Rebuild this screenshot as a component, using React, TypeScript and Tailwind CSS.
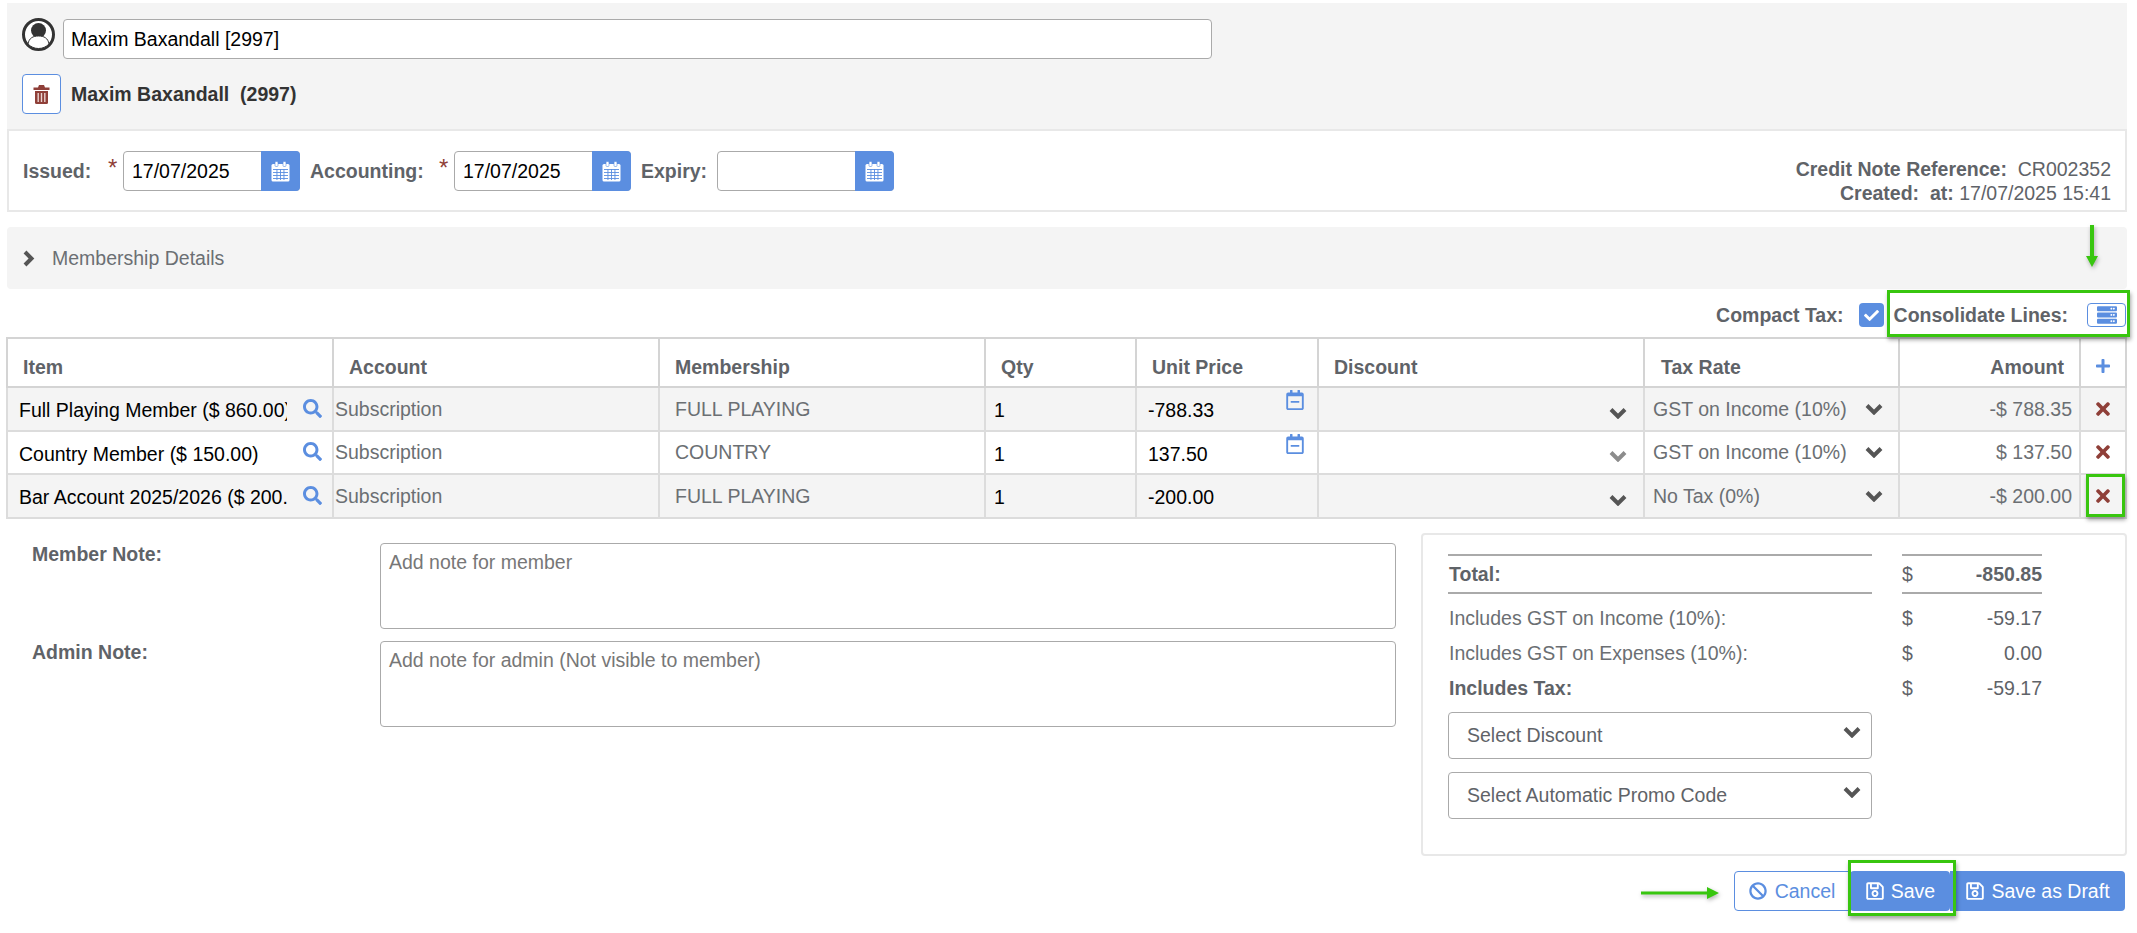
import React from 'react';
import {
  FaBan,
  FaCheck,
  FaPlus,
  FaRegCalendarMinus,
  FaRegSave,
  FaSearch,
  FaServer,
  FaTimes,
} from 'react-icons/fa';

const lines = [
  { item: 'Full Playing Member ($ 860.00)', membership: 'FULL PLAYING', price: '-788.33', tax: 'GST on Income (10%)', amount: '-$ 788.35', shade: true, cal: true },
  { item: 'Country Member ($ 150.00)', membership: 'COUNTRY', price: '137.50', tax: 'GST on Income (10%)', amount: '$ 137.50', shade: false, cal: true },
  { item: 'Bar Account 2025/2026 ($ 200.00)', membership: 'FULL PLAYING', price: '-200.00', tax: 'No Tax (0%)', amount: '-$ 200.00', shade: true, cal: false },
];

function CalendarIcon() {
  return (
    <svg width="19" height="21" viewBox="0 0 19 21" fill="none">
      <rect x="0.5" y="3" width="18" height="17.5" rx="1.5" fill="#fff" />
      <rect x="4" y="0.5" width="3" height="5" rx="1" fill="#fff" stroke="#5b8ee0" strokeWidth="0.6" />
      <rect x="12" y="0.5" width="3" height="5" rx="1" fill="#fff" stroke="#5b8ee0" strokeWidth="0.6" />
      <g fill="#5b8ee0">
        <rect x="2" y="8" width="15" height="0.9" />
        <rect x="2" y="11" width="15" height="0.9" />
        <rect x="2" y="14" width="15" height="0.9" />
        <rect x="2" y="17" width="15" height="0.9" />
        <rect x="5.500" y="8" width="0.9" height="11" />
        <rect x="9" y="8" width="0.9" height="11" />
        <rect x="12.500" y="8" width="0.9" height="11" />
      </g>
    </svg>
  );
}

function UserIcon() {
  return (
    <svg width="33" height="33" viewBox="0 0 33 33">
      <circle cx="16.5" cy="16.5" r="15" fill="#fff" stroke="#333" strokeWidth="3" />
      <circle cx="16.5" cy="12.5" r="7.500" fill="#333" />
      <path d="M6 26c1-6 5-8 10.500-8S26 20 27 26c-3 3-6.500 4.500-10.500 4.500S9 29 6 26z" fill="#fff" stroke="#333" strokeWidth="1" />
    </svg>
  );
}

function TrashIcon() {
  return (
    <svg width="17" height="19" viewBox="0 0 17 19" fill="#8f3f38">
      <path d="M6 0h5l1 2.500h4.500V5H.5V2.500H5z" />
      <path d="M2 6h13v11.500a1.500 1.500 0 0 1-1.500 1.500h-10A1.500 1.500 0 0 1 2 17.500z" />
      <g fill="#e9d3d0">
        <rect x="4.500" y="8" width="1.400" height="9" />
        <rect x="7.800" y="8" width="1.400" height="9" />
        <rect x="11.100" y="8" width="1.400" height="9" />
      </g>
    </svg>
  );
}

function Chevron({ color = '#555' }: { color?: string }) {
  return (
    <svg width="18" height="12" viewBox="0 0 18 12" fill="none" className="shrink-0">
      <path d="M2 2.500l7 7 7-7" stroke={color} strokeWidth="4" />
    </svg>
  );
}

function DateField({ value }: { value: string }) {
  return (
    <div className="flex h-10 w-[177px] rounded border border-[#aaaaaa] bg-white">
      <span className="flex-1 pl-[8px] leading-[38px] text-black">{value}</span>
      <span className="-my-px -mr-px flex w-[39px] items-center justify-center rounded-r bg-[#5b8ee0]">
        <CalendarIcon />
      </span>
    </div>
  );
}

function Highlight({ className }: { className: string }) {
  return <div className={`pointer-events-none absolute border-[3px] border-[#38c60f] shadow-[1px_3px_4px_rgba(0,0,0,0.35)] ${className}`} />;
}

export default function App() {
  return (
    <div className="relative h-[933px] w-[2137px] overflow-hidden bg-white pt-[3px] font-['Liberation_Sans',Arial,sans-serif] text-[19.5px] leading-[24px] text-[#5f6368]">
      {/* Member picker */}
      <div className="ml-[7px] h-[126px] w-[2120px] bg-[#f4f4f4] pl-[15px] pt-[15px]">
        <div className="flex items-start gap-[8px]">
          <UserIcon />
          <div className="mt-px h-10 w-[1149px] rounded border border-[#aaaaaa] bg-white pl-[7px] leading-[38px] text-black">Maxim Baxandall [2997]</div>
        </div>
        <div className="mt-[15px] flex items-center gap-[10px]">
          <button className="flex h-10 w-[39px] items-center justify-center rounded border border-[#5b8ee0] bg-white">
            <TrashIcon />
          </button>
          <span className="whitespace-pre font-bold text-[#333]">Maxim Baxandall  (2997)</span>
        </div>
      </div>

      {/* Dates */}
      <div className="ml-[7px] flex h-[83px] w-[2120px] items-start justify-between border-2 border-[#e8e8e8] pl-[14px] pr-[14px]">
        <div className="mt-5 flex items-center">
          <b className="w-[85px]">Issued:</b>
          <span className="w-[15px] -translate-y-[3px] text-[24px] text-[#8f3f38]">*</span>
          <DateField value="17/07/2025" />
          <b className="ml-[10px] w-[129px]">Accounting:</b>
          <span className="w-[15px] -translate-y-[3px] text-[24px] text-[#8f3f38]">*</span>
          <DateField value="17/07/2025" />
          <b className="ml-[10px] w-[76px]">Expiry:</b>
          <DateField value="" />
        </div>
        <div className="mt-[26px] text-right leading-[24px]">
          <div><b className="whitespace-pre">Credit Note Reference:  </b>CR002352</div>
          <div><b className="whitespace-pre">Created:  at: </b>17/07/2025 15:41</div>
        </div>
      </div>

      {/* Membership details */}
      <div className="ml-[7px] mt-[15px] flex h-[62px] w-[2120px] items-center rounded-sm bg-[#f4f4f4] pl-[15px] text-[#6b6f73]">
        <svg width="13" height="17" viewBox="0 0 13 17" fill="none" className="mr-[17px]">
          <path d="M3 2l6.500 6.500L3 15" stroke="#555" strokeWidth="4" />
        </svg>
        Membership Details
      </div>

      {/* Toggles */}
      <div className="ml-[7px] flex h-[48px] w-[2120px] items-center justify-end pr-px pt-[4px]">
        <b>Compact Tax:</b>
        <span className="ml-[15px] flex h-6 w-[25px] items-center justify-center rounded bg-[#5b8ee0] text-[15px] text-white">
          <FaCheck />
        </span>
        <b className="ml-[10px]">Consolidate Lines:</b>
        <span className="ml-[19px] flex h-6 w-[39px] items-center justify-center rounded border border-[#5b8ee0] bg-white text-[20px] text-[#5b8ee0]">
          <FaServer />
        </span>
      </div>

      {/* Lines */}
      <table className="ml-[6px] w-[2121px] table-fixed border-collapse">
        <thead>
          <tr className="h-[49px] text-left">
            <th className="w-[326px] border-2 border-[#d4d4d4] pl-[15px] pt-[8px]">Item</th>
            <th className="w-[326px] border-2 border-[#d4d4d4] pl-[15px] pt-[8px]">Account</th>
            <th className="w-[326px] border-2 border-[#d4d4d4] pl-[15px] pt-[8px]">Membership</th>
            <th className="w-[151px] border-2 border-[#d4d4d4] pl-[15px] pt-[8px]">Qty</th>
            <th className="w-[182px] border-2 border-[#d4d4d4] pl-[15px] pt-[8px]">Unit Price</th>
            <th className="w-[326px] border-2 border-[#d4d4d4] pl-[15px] pt-[8px]">Discount</th>
            <th className="w-[255px] border-2 border-[#d4d4d4] pl-4 pt-[8px]">Tax Rate</th>
            <th className="w-[181px] border-2 border-[#d4d4d4] pr-[15px] pt-[8px] text-right">Amount</th>
            <th className="border-2 border-[#d4d4d4] text-center text-[16px] text-[#5b8ee0]">
              <FaPlus className="mx-auto translate-y-[3px]" />
            </th>
          </tr>
        </thead>
        <tbody>
          {lines.map((line) => (
            <tr key={line.item} className={`h-[43.500px] ${line.shade ? 'bg-[#f4f4f4]' : 'bg-white'}`}>
              <td className="border-2 border-[#dcdcdc] pl-[11px] pt-[3px] text-black">
                <div className="flex items-center">
                  <span className="w-[268px] overflow-hidden whitespace-nowrap">{line.item}</span>
                  <FaSearch className="ml-[16px] -translate-y-[2px] text-[19px] text-[#5b8ee0]" />
                </div>
              </td>
              <td className="border-2 border-[#dcdcdc] pl-px text-[#6b6f73]">Subscription</td>
              <td className="border-2 border-[#dcdcdc] pl-[15px] text-[#6b6f73]">{line.membership}</td>
              <td className="border-2 border-[#dcdcdc] pl-[8px] pt-[3px] text-black">1</td>
              <td className="border-2 border-[#dcdcdc] pl-[11px] pt-[3px] text-black">
                <div className="flex items-start justify-between pr-3">
                  <span>{line.price}</span>
                  {line.cal && <FaRegCalendarMinus className="-mt-[8px] text-[20px] text-[#5b8ee0]" />}
                </div>
              </td>
              <td className="border-2 border-[#dcdcdc] pr-4 pt-[8px]">
                <div className="flex justify-end">
                  <Chevron color={line.shade ? '#555' : '#8c8c8c'} />
                </div>
              </td>
              <td className="border-2 border-[#dcdcdc] pl-2 pr-[15px] text-[#6b6f73]">
                <div className="flex items-center justify-between">
                  {line.tax}
                  <Chevron />
                </div>
              </td>
              <td className="border-2 border-[#dcdcdc] pr-[7px] text-right text-[#6b6f73]">{line.amount}</td>
              <td className="border-2 border-[#dcdcdc] text-[#8f3f38]">
                <FaTimes className="mx-auto text-[20px]" />
              </td>
            </tr>
          ))}
        </tbody>
      </table>

      {/* Notes and totals */}
      <div className="ml-[32px] mt-[14px] flex items-start">
        <div className="mt-[10px] grid w-[1364px] grid-cols-[348px_1016px] gap-y-3">
          <b className="-mt-px">Member Note:</b>
          <div className="h-[86px] rounded border border-[#aaaaaa] bg-white pl-2 pt-[6px] text-[#777]">Add note for member</div>
          <b className="-mt-px">Admin Note:</b>
          <div className="h-[86px] rounded border border-[#aaaaaa] bg-white pl-2 pt-[6px] text-[#777]">Add note for admin (Not visible to member)</div>
        </div>
        <div className="ml-[25px] h-[323px] w-[706px] rounded border-2 border-[#e8e8e8] pl-[25px] pt-[19px]">
          <div className="grid grid-cols-[424px_140px] gap-x-[30px]">
            <b className="flex h-10 items-center border-y-2 border-[#aaaaaa] pl-px">Total:</b>
            <div className="flex h-10 items-center justify-between border-y-2 border-[#aaaaaa]">
              <span>$</span>
              <b>-850.85</b>
            </div>
            <div className="mt-[7px] flex h-[35px] items-center pl-px text-[#6b6f73]">Includes GST on Income (10%):</div>
            <div className="mt-[7px] flex h-[35px] items-center justify-between"><span>$</span><span>-59.17</span></div>
            <div className="flex h-[35px] items-center pl-px text-[#6b6f73]">Includes GST on Expenses (10%):</div>
            <div className="flex h-[35px] items-center justify-between"><span>$</span><span>0.00</span></div>
            <b className="flex h-[35px] items-center pl-px">Includes Tax:</b>
            <div className="flex h-[35px] items-center justify-between"><span>$</span><span>-59.17</span></div>
          </div>
          <div className="mt-[6px] flex h-[47px] w-[424px] items-center justify-between rounded border border-[#aaaaaa] pl-[18px] pr-[10px]">
            Select Discount
            <span className="-translate-y-[3px]"><Chevron /></span>
          </div>
          <div className="mt-[13px] flex h-[47px] w-[424px] items-center justify-between rounded border border-[#aaaaaa] pl-[18px] pr-[10px]">
            Select Automatic Promo Code
            <span className="-translate-y-[3px]"><Chevron /></span>
          </div>
        </div>
      </div>

      {/* Actions */}
      <div className="mt-[15px] flex justify-end pr-3">
        <button className="flex h-10 w-[116px] items-center justify-center gap-[8px] rounded-l border border-[#5b8ee0] bg-white text-[#5b8ee0]">
          <FaBan className="text-[18px]" />
          Cancel
        </button>
        <button className="flex h-10 w-[100px] items-center justify-center gap-[6px] rounded bg-[#5b8ee0] text-white">
          <FaRegSave className="text-[20px]" />
          Save
        </button>
        <button className="flex h-10 w-[175px] items-center justify-center gap-[6px] rounded-r bg-[#5b8ee0] text-white">
          <FaRegSave className="text-[20px]" />
          Save as Draft
        </button>
      </div>

      {/* Annotations */}
      <Highlight className="left-[1887px] top-[290px] h-[47px] w-[243px]" />
      <Highlight className="left-[2086px] top-[474px] h-[43px] w-[39px]" />
      <Highlight className="left-[1848px] top-[860px] h-[56px] w-[108px]" />
      <svg className="absolute left-[2086px] top-[225px] drop-shadow-[1px_2px_2px_rgba(0,0,0,0.3)]" width="12" height="42" viewBox="0 0 12 42">
        <path d="M4 0h4v31h4l-6 11-6-11h4z" fill="#38c60f" />
      </svg>
      <svg className="absolute left-[1641px] top-[887px] drop-shadow-[1px_2px_2px_rgba(0,0,0,0.3)]" width="78" height="12" viewBox="0 0 78 12">
        <path d="M0 4.500h66V0l12 6-12 6V7.500H0z" fill="#38c60f" />
      </svg>
    </div>
  );
}
